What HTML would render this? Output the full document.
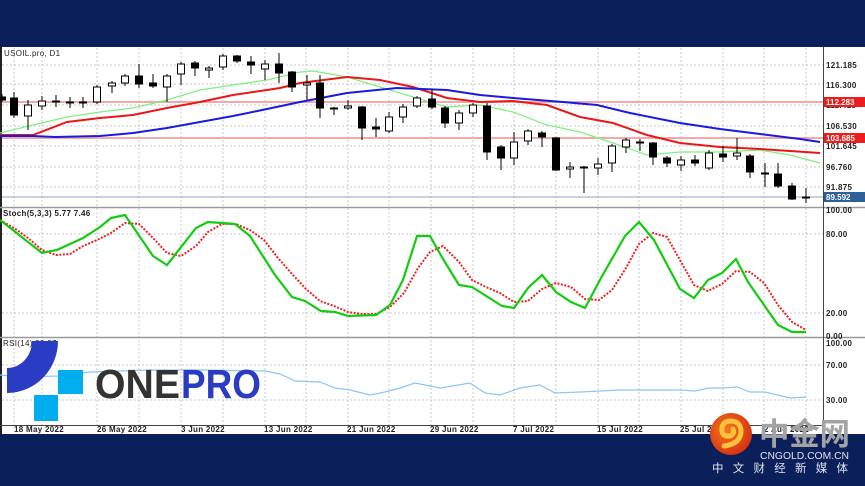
<!DOCTYPE html>
<html><head><meta charset="utf-8"><style>
html,body{margin:0;padding:0;background:#0b1f5a;}
body{width:865px;height:486px;overflow:hidden;position:relative;}
svg{position:absolute;left:0;top:0;}
</style></head><body>
<svg width="865" height="486" viewBox="0 0 865 486" xmlns="http://www.w3.org/2000/svg" font-family="Liberation Sans, sans-serif">
<rect x="0" y="0" width="865" height="486" fill="#0b1f5a"/>
<rect x="0" y="47" width="865" height="387" fill="#ffffff"/>
<rect x="0" y="47" width="2" height="387" fill="#222"/>
<g stroke="#c8c8c8" stroke-dasharray="2,2" stroke-width="1">
<line x1="14" y1="48" x2="14" y2="425"/><line x1="42" y1="48" x2="42" y2="425"/><line x1="97" y1="48" x2="97" y2="425"/><line x1="139" y1="48" x2="139" y2="425"/><line x1="181" y1="48" x2="181" y2="425"/><line x1="223" y1="48" x2="223" y2="425"/><line x1="265" y1="48" x2="265" y2="425"/><line x1="306" y1="48" x2="306" y2="425"/><line x1="348" y1="48" x2="348" y2="425"/><line x1="389" y1="48" x2="389" y2="425"/><line x1="431" y1="48" x2="431" y2="425"/><line x1="473" y1="48" x2="473" y2="425"/><line x1="514" y1="48" x2="514" y2="425"/><line x1="556" y1="48" x2="556" y2="425"/><line x1="598" y1="48" x2="598" y2="425"/><line x1="639" y1="48" x2="639" y2="425"/><line x1="681" y1="48" x2="681" y2="425"/><line x1="723" y1="48" x2="723" y2="425"/><line x1="764" y1="48" x2="764" y2="425"/><line x1="806" y1="48" x2="806" y2="425"/>
<line x1="2" y1="65" x2="823" y2="65"/><line x1="2" y1="84" x2="823" y2="84"/><line x1="2" y1="105" x2="823" y2="105"/><line x1="2" y1="126" x2="823" y2="126"/><line x1="2" y1="146" x2="823" y2="146"/><line x1="2" y1="167" x2="823" y2="167"/><line x1="2" y1="187" x2="823" y2="187"/>
<line x1="2" y1="234" x2="823" y2="234"/><line x1="2" y1="313" x2="823" y2="313"/>
<line x1="2" y1="365" x2="823" y2="365"/><line x1="2" y1="400" x2="823" y2="400"/>
</g>
<line x1="2" y1="102" x2="823" y2="102" stroke="#f6a8a8" stroke-width="2"/>
<line x1="2" y1="138" x2="823" y2="138" stroke="#f6a8a8" stroke-width="2"/>
<line x1="2" y1="197" x2="823" y2="197" stroke="#8fa6c4" stroke-width="1"/>
<line x1="0" y1="207.5" x2="865" y2="207.5" stroke="#999" stroke-width="1.5"/>
<line x1="0" y1="337.5" x2="865" y2="337.5" stroke="#999" stroke-width="1.5"/>
<line x1="0" y1="425.5" x2="823" y2="425.5" stroke="#444" stroke-width="1"/>
<line x1="823.5" y1="47" x2="823.5" y2="434" stroke="#444" stroke-width="1"/>
<polyline fill="none" stroke="#7ef07e" stroke-width="1.2" points="0,133 33,125 67,117 100,112 133,108 167,100 200,90 233,85 267,80 300,72 313,71 347,77 380,87 413,97 447,107 480,105 513,112 547,125 580,132 613,143 647,155 680,152 720,152 760,150 790,155 820,163"/>
<polyline fill="none" stroke="#e81818" stroke-width="2" points="0,135 33,135 67,122 100,118 133,115 167,108 200,102 233,95 267,90 280,88 300,83 347,77 380,80 413,87 447,98 480,102 513,101 547,105 580,117 613,123 647,135 680,143 720,147 760,149 790,151 820,153"/>
<polyline fill="none" stroke="#1a1ae0" stroke-width="2" points="0,136 33,136 55,137 100,136 133,133 167,128 200,122 233,116 267,109 300,102 347,93 397,88 447,90 480,95 513,98 563,102 597,105 630,113 680,123 720,129 760,134 800,139 820,142"/>
<g id="cd" stroke="#000" stroke-width="1"></g>
<polyline fill="none" stroke="#ee2222" stroke-width="2" stroke-dasharray="2,1.5" points="0,220 14,228 28,238 42,250 56,255 70,254 83,246 97,240 111,233 125,223 139,224 153,238 167,253 181,256 196,246 208,232 222,224 236,224 250,230 264,240 278,258 292,274 306,289 320,301 334,306 348,312 362,314 376,314 390,307 404,293 418,268 430,252 443,246 459,262 472,280 486,287 500,293 514,302 528,301 542,289 556,283 571,287 585,299 599,300 612,290 626,268 639,244 653,233 667,237 680,260 694,285 708,291 722,284 736,271 750,272 764,283 778,305 792,322 806,330"/>
<polyline fill="none" stroke="#11cc11" stroke-width="2.2" points="0,220 42,253 57,250 83,238 100,227 111,218 125,215 153,256 167,265 196,228 208,222 235,224 250,236 275,275 292,297 305,301 321,311 335,312 348,316 376,315 390,305 403,280 417,236 430,236 443,259 459,285 472,287 502,306 514,308 528,288 542,275 556,292 571,302 585,308 601,278 625,236 639,222 654,240 680,289 694,298 708,280 722,273 736,259 748,282 778,325 792,332 806,332"/>
<polyline fill="none" stroke="#8ec5f5" stroke-width="1.2" points="0,375 20,377 60,376 90,372 150,370 200,370 265,371 280,374 295,381 320,382 335,388 350,390 370,395 385,392 400,388 415,383 440,388 470,383 485,393 500,395 520,388 540,385 555,393 580,392 600,391 620,390 660,390 680,390 695,391 709,388 723,388 737,387 750,392 765,392 790,398 806,397"/>
<g font-size="8" fill="#222" font-weight="bold" letter-spacing="0.3">
<text x="4" y="56" font-weight="normal">USOIL.pro, D1</text>
<text x="3" y="216">Stoch(5,3,3) 5.77 7.46</text>
<text x="3" y="346" font-weight="normal">RSI(14) 32.37</text>
<text x="826" y="68">121.185</text><text x="826" y="88">116.300</text><text x="826" y="108">111.415</text><text x="826" y="129">106.530</text><text x="826" y="149">101.645</text><text x="826" y="170">96.760</text><text x="826" y="190">91.875</text>
<text x="826" y="213">100.00</text><text x="826" y="237">80.00</text><text x="826" y="316">20.00</text><text x="826" y="339">0.00</text>
<text x="826" y="346">100.00</text><text x="826" y="368">70.00</text><text x="826" y="403">30.00</text>
<text x="14" y="432">18 May 2022</text><text x="97" y="432">26 May 2022</text><text x="181" y="432">3 Jun 2022</text><text x="264" y="432">13 Jun 2022</text><text x="347" y="432">21 Jun 2022</text><text x="430" y="432">29 Jun 2022</text><text x="513" y="432">7 Jul 2022</text><text x="597" y="432">15 Jul 2022</text><text x="680" y="432">25 Jul 2022</text><text x="764" y="432">2 Aug 2022</text>
</g>
<rect x="824" y="97" width="41" height="10" fill="#ee1c1c"/>
<text x="826" y="105" font-size="8" font-weight="bold" fill="#fff">112.283</text>
<rect x="824" y="133" width="41" height="10" fill="#ee1c1c"/>
<text x="826" y="141" font-size="8" font-weight="bold" fill="#fff">103.685</text>
<rect x="824" y="192" width="41" height="10" fill="#2d5f99"/>
<text x="826" y="200" font-size="8" font-weight="bold" fill="#fff">89.592</text>
<path d="M32,341 L58,341 A51,52 0 0 1 7,393 L7,368 A25,27 0 0 0 32,341 Z" fill="#2a3cc4"/>
<rect x="58" y="370" width="25" height="24" fill="#00aeef"/>
<rect x="34" y="395" width="24" height="26" fill="#00aeef"/>
<text x="95" y="398" font-size="41" font-weight="bold" fill="#333" textLength="85" lengthAdjust="spacingAndGlyphs">ONE</text>
<text x="181" y="398" font-size="41" font-weight="bold" fill="#2a3cc4" textLength="80" lengthAdjust="spacingAndGlyphs">PRO</text>
<defs><radialGradient id="og" cx="0.4" cy="0.4" r="0.7"><stop offset="0" stop-color="#f5781e"/><stop offset="1" stop-color="#d22a10"/></radialGradient></defs>
<circle cx="731" cy="434" r="21" fill="url(#og)"/>
<path d="M724,446 Q740,444 741,432 Q741,421 730,421 Q721,422 722,431 Q723,437 730,436 Q735,434 733,429" fill="none" stroke="#fbc33a" stroke-width="5" stroke-linecap="round"/>
<text x="759" y="445" font-size="31" font-weight="bold" fill="#a3a3a3" font-family="Liberation Sans, Noto Sans CJK SC, sans-serif" textLength="91" lengthAdjust="spacingAndGlyphs">中金网</text>
<text x="760" y="459" font-size="10.5" fill="#dfe3ee" textLength="89" lengthAdjust="spacingAndGlyphs">CNGOLD.COM.CN</text>
<text x="712" y="472" font-size="11.5" fill="#dfe3ee" font-family="Liberation Sans, Noto Sans CJK SC, sans-serif" textLength="136" lengthAdjust="spacing">中文财经新媒体</text>
</svg>
<script>
var d=[[2,97,100,94,102,1],[14,98,115,92,118,1],[28,105,116,100,130,0],[42,101,106,96,110,0],[56,101,101,95,107,0],[70,102,102,97,108,0],[83,102,102,97,108,0],[97,87,102,85,104,0],[112,83,86,81,93,0],[125,76,83,74,86,0],[139,76,84,64,88,1],[153,83,86,74,88,1],[167,76,87,74,102,0],[181,64,74,62,85,0],[195,63,68,61,76,1],[209,68,70,66,78,0],[223,56,67,54,70,0],[237,56,61,55,63,1],[251,62,65,56,74,1],[265,64,69,60,80,0],[279,64,73,53,83,1],[292,72,87,71,92,1],[307,83,85,75,100,0],[320,83,108,75,118,1],[334,108,108,107,115,0],[348,106,108,100,110,0],[362,107,128,106,140,1],[376,127,129,118,137,1],[389,117,131,112,133,0],[403,107,117,104,123,0],[417,98,106,96,108,0],[432,99,107,89,109,1],[445,108,123,106,128,1],[459,113,123,110,130,0],[473,105,113,103,117,0],[487,106,152,103,160,1],[501,147,158,145,170,1],[514,142,158,132,165,0],[528,131,141,129,145,0],[542,133,137,131,147,1],[556,138,170,137,171,1],[570,167,169,162,178,0],[584,167,167,166,193,0],[598,164,168,158,175,0],[612,146,163,144,172,0],[626,140,147,138,153,0],[640,142,142,139,151,0],[653,143,157,142,165,1],[667,158,163,156,167,1],[681,160,165,156,171,0],[695,160,163,155,166,1],[709,153,168,150,170,0],[723,154,157,146,162,1],[737,153,156,138,160,0],[750,156,172,154,178,1],[765,173,173,163,187,0],[778,174,186,163,188,1],[792,186,199,183,200,1],[806,197,197,188,203,0]];
var s='';d.forEach(function(c){var x=c[0],w=3.5;s+='<line x1="'+x+'" y1="'+c[3]+'" x2="'+x+'" y2="'+c[4]+'"/>';var h=Math.max(c[2]-c[1],1);s+='<rect x="'+(x-w)+'" y="'+c[1]+'" width="'+(2*w)+'" height="'+h+'" fill="'+(c[5]?'#000':'#fff')+'"/>';});
document.getElementById('cd').innerHTML=s;
</script>
</body></html>
